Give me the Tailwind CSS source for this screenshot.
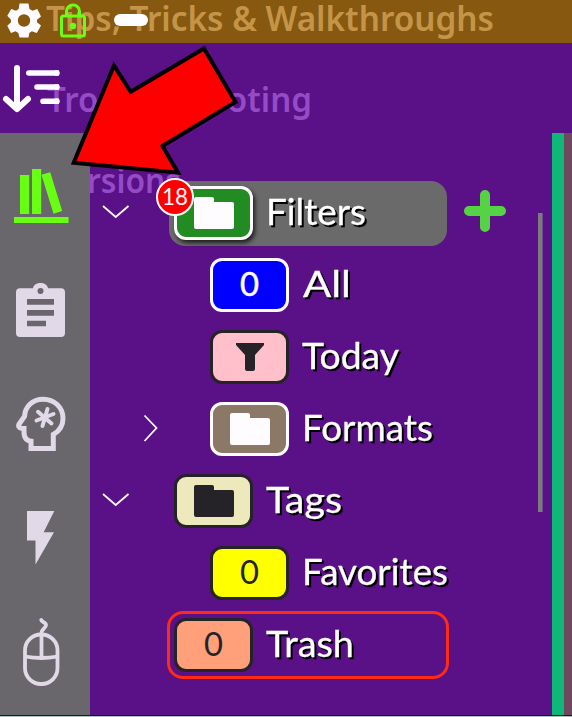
<!DOCTYPE html>
<html lang="en">
<head>
<meta charset="utf-8">
<title>Library</title>
<script src="https://cdn.jsdelivr.net/npm/@tailwindcss/browser@4"></script>
</head>
<body class="relative w-[572px] h-[717px] overflow-hidden bg-[#5a1087] font-['Lato','Open_Sans',sans-serif]">
<svg width="0" height="0" class="absolute">
  <symbol id="folder" viewBox="0 0 40 32"><path d="M2 0H18Q20 0 20 2V5H38Q40 5 40 7V30Q40 32 38 32H2Q0 32 0 30V2Q0 0 2 0Z" fill="currentColor"/></symbol>
</svg>
<div class="flex flex-col h-[717px]">
  <!-- title bar -->
  <header class="relative h-[43px] shrink-0 bg-[#875810]">
    <svg class="block overflow-visible" width="572" height="43">
      <text x="46" y="31" textLength="448" lengthAdjust="spacingAndGlyphs" font-family="Noto Sans, Open Sans, sans-serif" font-weight="600" font-size="34.5" fill="#c49549">Tips, Tricks &amp; Walkthroughs</text>
      <path fill="#fffcff" fill-rule="evenodd" d="M19.5 3.5H28.5L29.5 9L32.5 10.7L37.3 9L41 16.5L37 19.7V22.3L41 25.5L36.8 33L31.8 31.3L29.3 33L28.5 37.5H19.5L18.3 33L15.5 31.3L11 33L7.3 25.8L11 22.3V19.7L7.3 15.8L11.3 9L16 10.7L18.7 9ZM24 14.3A6.2 6.2 0 1 0 24 26.7A6.2 6.2 0 1 0 24 14.3Z"/>
      <g fill="none" stroke="#69ff13" stroke-width="3"><rect x="61.5" y="16" width="23" height="20" rx="2"/><path d="M66.5 16V11.5A6.5 6.5 0 0 1 79.5 11.5V16"/></g>
      <circle cx="73" cy="26" r="3.2" fill="#69ff13"/>
      <rect x="114" y="14" width="34" height="12" rx="6" fill="#fffcff"/>
    </svg>
  </header>
  <!-- sort bar -->
  <div class="h-[90px] shrink-0">
    <svg class="block" width="572" height="90">
      <text x="47" y="69" textLength="265" lengthAdjust="spacingAndGlyphs" font-family="Noto Sans, Open Sans, sans-serif" font-weight="600" font-size="34" fill="#944bc5">Troubleshooting</text>
      <g fill="none" stroke="#fffcff" stroke-width="6" stroke-linecap="round" stroke-linejoin="round"><path d="M17 25V65M6 56L17 66L28 56"/><path stroke-width="5.6" d="M28.8 30H57M37 44H57M43 58.3H57"/></g>
      <path d="M55 27.2H59V32.8H55ZM55 41.2H59V46.8H55ZM55 55.5H59V61.1H55Z" fill="#fffcff"/>
    </svg>
  </div>
  <div class="flex h-[582px] shrink-0">
    <!-- icon rail -->
    <nav class="w-[90px] bg-[#69666c] text-[#e1d9e7] shrink-0">
      <svg class="block" width="90" height="582" viewBox="0 133 90 582">
        <g fill="#69ff13"><path d="M20 175H29.2V214H20ZM32 169H41.2V214H32ZM14 217H68.5V223H14Z"/><path d="M41.5 174.7L50.2 172.2L62.2 211L53.5 213.8Z"/></g>
        <path fill="currentColor" fill-rule="evenodd" d="M20 288.3H33C34 281.3 47 281.3 48 288.3H61Q65 288.3 65 292.3V333Q65 337 61 337H20Q16 337 16 333V292.3Q16 288.3 20 288.3ZM40.5 288A3 3 0 1 0 40.5 294A3 3 0 1 0 40.5 288ZM27 299H54V304.7H27ZM27 310H54V315.7H27ZM27 320.8H46V326.3H27Z"/>
        <g fill="none" stroke="currentColor" stroke-width="5"><path d="M31 441.5V448.5H53.3V434.5C59.5 431 63 426 63 418.5C63 407 54 399.2 43.3 399.2C32 399.2 25 407 24.5 416.5L19.5 423.5C17.5 426.5 19 428.5 24 428.5V432C24 438 26.5 441.5 33.5 441.5"/><g stroke-width="4" stroke-linecap="round"><path d="M47.5 409L42.5 426M38 411.8L51.5 423.5M36.5 420.5L53.5 414"/></g></g>
        <path fill="currentColor" d="M27 511H54.3L43.7 532.3H54L35.5 564.5V540.5H27Z"/>
        <g fill="none" stroke="currentColor" stroke-width="3.8"><rect x="25" y="634.5" width="32.5" height="49.5" rx="16"/><path d="M25 656.5Q41.5 659.5 57.5 656.5M41.5 658V635"/><path stroke-linecap="round" d="M41.2 633.5C41.2 629 46 628.5 46 625C46 622 41.5 622.5 41.2 619.8"/></g>
      </svg>
    </nav>
    <!-- tree -->
    <main class="relative w-[462px] shrink-0 pt-[44px]">
      <svg class="absolute left-0 top-0" width="140" height="80"><text x="-41" y="60" textLength="132" lengthAdjust="spacingAndGlyphs" font-family="Noto Sans, Open Sans, sans-serif" font-weight="600" font-size="34" fill="#944bc5">Versions</text></svg>
      <div class="relative flex h-[72px] items-center pl-[12px]">
        <svg class="mb-[4px] shrink-0" width="28" height="16"><path d="M1 3L13.7 14L26.5 3" fill="none" stroke="#fffcff" stroke-width="1.8"/></svg>
        <div class="ml-[39px] flex h-[65px] w-[278px] items-center rounded-[16px] bg-[#6a6a6a] pl-[5px]">
          <div class="relative flex h-[54px] w-[79px] shrink-0 items-center justify-center rounded-[12px] border-[3px] border-[#fffcff] bg-[#228b22] text-[#fffcff] shadow-[2px_3px_4px_rgba(0,0,0,0.7)]">
            <svg width="40" height="32"><use href="#folder"/></svg>
            <div class="absolute -left-[21px] -top-[11px] flex h-[38px] w-[38px] items-center justify-center rounded-full border-2 border-[#fffcff] bg-[#ff0000]"><svg width="34" height="34"><text x="4" y="24.5" textLength="26" lengthAdjust="spacingAndGlyphs" font-size="23" fill="#fffcff">18</text></svg></div>
          </div>
          <svg class="ml-[13px] overflow-visible drop-shadow-[2px_2px_0_#000]" width="170" height="50"><text x="0" y="37" textLength="100" lengthAdjust="spacingAndGlyphs" font-size="36" fill="#fff" stroke="#fff" stroke-width=".3">Filters</text></svg>
        </div>
        <svg class="mb-[4px] ml-[17px]" width="42" height="42"><path d="M21 5V37M5 21H37" stroke="#56d345" stroke-width="10" stroke-linecap="round"/></svg>
      </div>
      <div class="flex h-[72px] items-center pl-[120px]">
        <div class="flex h-[54px] w-[79px] items-center justify-center rounded-[12px] border-[3px] border-[#fffcff] bg-[#0000ff]"><svg class="overflow-visible" width="20" height="34"><text x="0" y="28" textLength="19" lengthAdjust="spacingAndGlyphs" font-size="32" fill="#fffcff" stroke="#fffcff" stroke-width=".5">0</text></svg></div>
        <svg class="ml-[13px] overflow-visible drop-shadow-[2px_2px_0_#000]" width="170" height="50"><text x="1" y="37" textLength="48" lengthAdjust="spacingAndGlyphs" font-size="36" fill="#fff" stroke="#fff" stroke-width=".3">All</text></svg>
      </div>
      <div class="flex h-[72px] items-center pl-[120px]">
        <div class="flex h-[54px] w-[79px] items-center justify-center rounded-[12px] border-[3px] border-[#262328] bg-[#ffc0cb]"><svg width="28" height="28"><path d="M0 0H28V2L19 12V26Q19 28 17 28H11Q9 28 9 26V12L0 2Z" fill="#262328"/></svg></div>
        <svg class="ml-[13px] overflow-visible drop-shadow-[2px_2px_0_#000]" width="170" height="50"><text x="0" y="37" textLength="97" lengthAdjust="spacingAndGlyphs" font-size="36" fill="#fff" stroke="#fff" stroke-width=".3">Today</text></svg>
      </div>
      <div class="flex h-[72px] items-center pl-[53px]">
        <svg class="mb-[2px]" width="16" height="28"><path d="M1.5 1.5L13.5 14L1.5 27" fill="none" stroke="#fffcff" stroke-width="1.8"/></svg>
        <div class="ml-[51px] flex h-[54px] w-[79px] items-center justify-center rounded-[12px] border-[3px] border-[#fffcff] bg-[#8b7866] text-[#fffcff]"><svg width="40" height="32"><use href="#folder"/></svg></div>
        <svg class="ml-[13px] overflow-visible drop-shadow-[2px_2px_0_#000]" width="170" height="50"><text x="0" y="37" textLength="131" lengthAdjust="spacingAndGlyphs" font-size="36" fill="#fff" stroke="#fff" stroke-width=".3">Formats</text></svg>
      </div>
      <div class="flex h-[72px] items-center pl-[12px]">
        <svg class="mb-[4px]" width="28" height="16"><path d="M1 3L13.7 14L26.5 3" fill="none" stroke="#fffcff" stroke-width="1.8"/></svg>
        <div class="ml-[44px] flex h-[54px] w-[79px] items-center justify-center rounded-[12px] border-[3px] border-[#262328] bg-[#eee8bd] text-[#262328]"><svg width="40" height="32"><use href="#folder"/></svg></div>
        <svg class="ml-[13px] overflow-visible drop-shadow-[2px_2px_0_#000]" width="170" height="50"><text x="0" y="37" textLength="76" lengthAdjust="spacingAndGlyphs" font-size="36" fill="#fff" stroke="#fff" stroke-width=".3">Tags</text></svg>
      </div>
      <div class="flex h-[72px] items-center pl-[120px]">
        <div class="flex h-[54px] w-[79px] items-center justify-center rounded-[12px] border-[3px] border-[#262328] bg-[#ffff00]"><svg class="overflow-visible" width="20" height="34"><text x="0" y="28" textLength="19" lengthAdjust="spacingAndGlyphs" font-size="32" fill="#262328">0</text></svg></div>
        <svg class="ml-[13px] overflow-visible drop-shadow-[2px_2px_0_#000]" width="170" height="50"><text x="0" y="37" textLength="146" lengthAdjust="spacingAndGlyphs" font-size="36" fill="#fff" stroke="#fff" stroke-width=".3">Favorites</text></svg>
      </div>
      <div class="flex h-[72px] items-center pl-[77px]">
        <div class="flex h-[68px] w-[282px] items-center rounded-[16px] border-[3px] border-[#ff2b13] pl-[4px]">
          <div class="flex h-[54px] w-[79px] shrink-0 items-center justify-center rounded-[12px] border-[3px] border-[#262328] bg-[#ffa07a]"><svg class="overflow-visible" width="20" height="34"><text x="0" y="28" textLength="19" lengthAdjust="spacingAndGlyphs" font-size="32" fill="#262328">0</text></svg></div>
          <svg class="ml-[13px] overflow-visible drop-shadow-[2px_2px_0_#000]" width="170" height="50"><text x="0" y="37" textLength="88" lengthAdjust="spacingAndGlyphs" font-size="36" fill="#fff" stroke="#fff" stroke-width=".3">Trash</text></svg>
        </div>
      </div>
      <!-- scrollbar thumb -->
      <div class="absolute left-[448px] top-[80px] h-[299px] w-[5px] border-r border-[#68518a] bg-[#7d7a7f]"></div>
    </main>
    <div class="w-[12px] bg-[#0db878]"></div>
    <div class="w-[8px] bg-[#714760]"></div>
  </div>
  <div class="h-[2px] shrink-0 border-t border-[#1c1722] bg-[#a3c6bd]"></div>
</div>
<!-- pointer arrow -->
<svg class="absolute left-0 top-0" width="260" height="200"><path d="M114 65.5L130.7 91.7L204 48.5L235.5 102L162.5 146L178 172.7L73.7 162.8Z" fill="#ff0000" stroke="#000" stroke-width="4"/></svg>
</body>
</html>
